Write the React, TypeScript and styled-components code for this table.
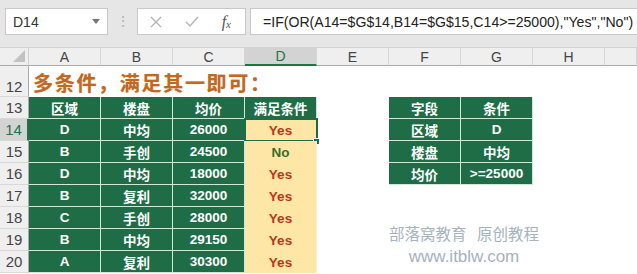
import styled, { createGlobalStyle, css } from 'styled-components';

const GlobalStyle = createGlobalStyle`
  html, body {
    margin: 0;
    padding: 0;
    background: #ffffff;
    font-family: "Liberation Sans", "Noto Sans CJK SC", sans-serif;
  }
`;

type Tone = 'blank' | 'green' | 'yellow';

interface CellData {
  text?: string;
  tone: Tone;
  result?: 'yes' | 'no';
}

const columns = ['A', 'B', 'C', 'D', 'E', 'F', 'G', 'H', ''];

const left: [string, string, string, string][] = [
  ['D', '中均', '26000', 'Yes'],
  ['B', '手创', '24500', 'No'],
  ['D', '中均', '18000', 'Yes'],
  ['B', '复利', '32000', 'Yes'],
  ['C', '手创', '28000', 'Yes'],
  ['B', '中均', '29150', 'Yes'],
  ['A', '复利', '30300', 'Yes'],
];

const right: [string, string][] = [
  ['字段', '条件'],
  ['区域', 'D'],
  ['楼盘', '中均'],
  ['均价', '>=25000'],
];

const buildRow = (row: number): CellData[] => {
  const cells: CellData[] = Array(9)
    .fill(0)
    .map(() => ({ tone: 'blank' as Tone }));
  if (row === 13) {
    ['区域', '楼盘', '均价', '满足条件'].forEach((t, i) => {
      cells[i] = { text: t, tone: 'green' };
    });
  } else if (row >= 14) {
    const [a, b, c, d] = left[row - 14];
    cells[0] = { text: a, tone: 'green' };
    cells[1] = { text: b, tone: 'green' };
    cells[2] = { text: c, tone: 'green' };
    cells[3] = { text: d, tone: 'yellow', result: d === 'Yes' ? 'yes' : 'no' };
  }
  if (row >= 13 && row <= 16) {
    const [f, g] = right[row - 13];
    cells[5] = { text: f, tone: 'green' };
    cells[6] = { text: g, tone: 'green' };
  }
  return cells;
};

export default function App() {
  const rows = [13, 14, 15, 16, 17, 18, 19, 20];

  return (
    <>
      <GlobalStyle />
      <Page>
        <FormulaBar>
          <NameBox>
            <span>D14</span>
            <svg width="8" height="5" viewBox="0 0 8 5">
              <path d="M0 0 L8 0 L4 5 Z" fill="#777" />
            </svg>
          </NameBox>
          <Dots>⋮</Dots>
          <ActionBox>
            <svg width="12" height="12" viewBox="0 0 12 12">
              <path d="M1 1 L11 11 M11 1 L1 11" stroke="#b4b4b4" strokeWidth="1.4" />
            </svg>
            <svg width="14" height="12" viewBox="0 0 14 12">
              <path d="M1 6 L5 10 L13 1" stroke="#b4b4b4" strokeWidth="1.4" fill="none" />
            </svg>
            <Fx>
              f<sub>x</sub>
            </Fx>
          </ActionBox>
          <FormulaInput>
            =IF(OR(A14=$G$14,B14=$G$15,C14&gt;=25000),"Yes","No")
          </FormulaInput>
        </FormulaBar>

        <Sheet>
          <Corner>
            <svg width="12" height="12" viewBox="0 0 12 12">
              <path d="M12 0 L12 12 L0 12 Z" fill="#c2c2c2" />
            </svg>
          </Corner>
          {columns.map((c) => (
            <ColHead key={c || 'I'} $active={c === 'D'}>
              {c}
            </ColHead>
          ))}

          <RowHead $tall>12</RowHead>
          <Title>多条件，满足其一即可：</Title>
          <Cell $tone="blank" />
          <Cell $tone="blank" />
          <Cell $tone="blank" />
          <Cell $tone="blank" />

          {rows.map((r) => (
            <RowGroup key={r} row={r} />
          ))}

          <Watermark>
            <WaterLine>部落窝教育&nbsp;&nbsp;&nbsp;原创教程</WaterLine>
            <WaterUrl>www.itblw.com</WaterUrl>
          </Watermark>
        </Sheet>
      </Page>
    </>
  );
}

const RowGroup = ({ row }: { row: number }) => (
  <>
    <RowHead $active={row === 14}>{row}</RowHead>
    {buildRow(row).map((cell, i) => (
      <Cell
        key={i}
        $tone={cell.tone}
        $result={cell.result}
        $selected={row === 14 && i === 3}
      >
        {cell.text}
      </Cell>
    ))}
  </>
);

const Page = styled.div`
  width: 637px;
  height: 274px;
  overflow: hidden;
  display: flex;
  flex-direction: column;
`;

const FormulaBar = styled.div`
  height: 48px;
  background: #e6e6e6;
  display: flex;
  align-items: flex-start;
  padding: 8px 0 0 5px;
  box-sizing: border-box;
  border-bottom: 1px solid #d0d0d0;
`;

const Box = styled.div`
  height: 27px;
  box-sizing: border-box;
  background: #ffffff;
  border: 1px solid #c8c8c8;
  display: flex;
  align-items: center;
`;

const NameBox = styled(Box)`
  width: 103px;
  justify-content: space-between;
  padding: 0 7px 0 7px;
  font-size: 14px;
  color: #333;
`;

const Dots = styled.div`
  width: 29px;
  text-align: center;
  color: #b0b0b0;
  font-size: 14px;
  line-height: 27px;
`;

const ActionBox = styled(Box)`
  width: 109px;
  justify-content: space-between;
  padding: 0 14px 0 12px;
`;

const Fx = styled.span`
  font-family: "Liberation Serif", serif;
  font-style: italic;
  font-size: 16px;
  color: #555;
  sub {
    font-size: 11px;
    vertical-align: -1px;
  }
`;

const FormulaInput = styled(Box)`
  flex: 1;
  margin-left: 4px;
  border-right: none;
  padding-left: 12px;
  font-size: 14.1px;
  color: #222;
  white-space: nowrap;
`;

const Sheet = styled.div`
  position: relative;
  display: grid;
  grid-template-columns: 29px repeat(8, 72px) 1fr;
  grid-template-rows: 18px 31px repeat(8, 22px);
`;

const headBase = css`
  background: #efefef;
  box-sizing: border-box;
  color: #444;
  display: flex;
  justify-content: center;
`;

const Corner = styled.div`
  ${headBase};
  align-items: flex-end;
  justify-content: flex-end;
  padding: 0 3px 3px 0;
  border-right: 1px solid #d0d0d0;
  border-bottom: 1px solid #ababab;
`;

const ColHead = styled.div<{ $active?: boolean }>`
  ${headBase};
  align-items: center;
  font-size: 14px;
  border-right: 1px solid #d6d6d6;
  border-bottom: 1px solid #ababab;
  ${({ $active }) =>
    $active &&
    css`
      background: #d3d3d3;
      color: #217346;
      border-bottom: 2px solid #217346;
    `}
`;

const RowHead = styled.div<{ $active?: boolean; $tall?: boolean }>`
  ${headBase};
  align-items: ${({ $tall }) => ($tall ? 'flex-end' : 'center')};
  padding-bottom: ${({ $tall }) => ($tall ? '1px' : '0')};
  font-size: 15px;
  border-right: 1px solid #ababab;
  border-bottom: 1px solid #d8d8d8;
  ${({ $active }) =>
    $active &&
    css`
      background: #d3d3d3;
      color: #217346;
      border-right: 2px solid #217346;
    `}
`;

const Title = styled.div`
  grid-column: 2 / span 5;
  display: flex;
  align-items: center;
  padding: 2px 0 0 4px;
  font-family: "Noto Sans CJK SC", sans-serif;
  font-weight: 700;
  font-size: 20px;
  color: #c5671d;
  letter-spacing: 1.7px;
  text-shadow: 0 0 1px rgba(150, 70, 10, 0.4);
`;

const Cell = styled.div<{
  $tone: Tone;
  $result?: 'yes' | 'no';
  $selected?: boolean;
}>`
  position: relative;
  box-sizing: border-box;
  display: flex;
  align-items: center;
  justify-content: center;
  font-size: 13.5px;
  font-weight: 700;
  white-space: nowrap;
  ${({ $tone }) =>
    $tone === 'green' &&
    css`
      background: #1f6d46;
      color: #ffffff;
      border-right: 1px solid #cfe8d8;
      border-bottom: 1px solid #cfe8d8;
    `}
  ${({ $tone, $result }) =>
    $tone === 'yellow' &&
    css`
      background: #fee7a6;
      color: ${$result === 'yes' ? '#b8361a' : '#3d6b2c'};
      border-right: 1px solid #f7f0dc;
    `}
  ${({ $selected }) =>
    $selected &&
    css`
      outline: 2px solid #1f6d46;
      outline-offset: -1px;
      &::after {
        content: '';
        position: absolute;
        right: -4px;
        bottom: -4px;
        width: 5px;
        height: 5px;
        background: #1f6d46;
        border: 1px solid #fff;
      }
    `}
`;

const Watermark = styled.div`
  position: absolute;
  left: 384px;
  top: 174px;
  width: 160px;
  display: flex;
  flex-direction: column;
  align-items: center;
  gap: 3px;
  pointer-events: none;
`;

const WaterLine = styled.div`
  font-family: "Noto Sans CJK SC", sans-serif;
  font-size: 15.5px;
  color: #a5b2bf;
  white-space: nowrap;
`;

const WaterUrl = styled.div`
  font-family: "Liberation Sans", sans-serif;
  font-size: 17px;
  color: #a5b2bf;
  white-space: nowrap;
`;
